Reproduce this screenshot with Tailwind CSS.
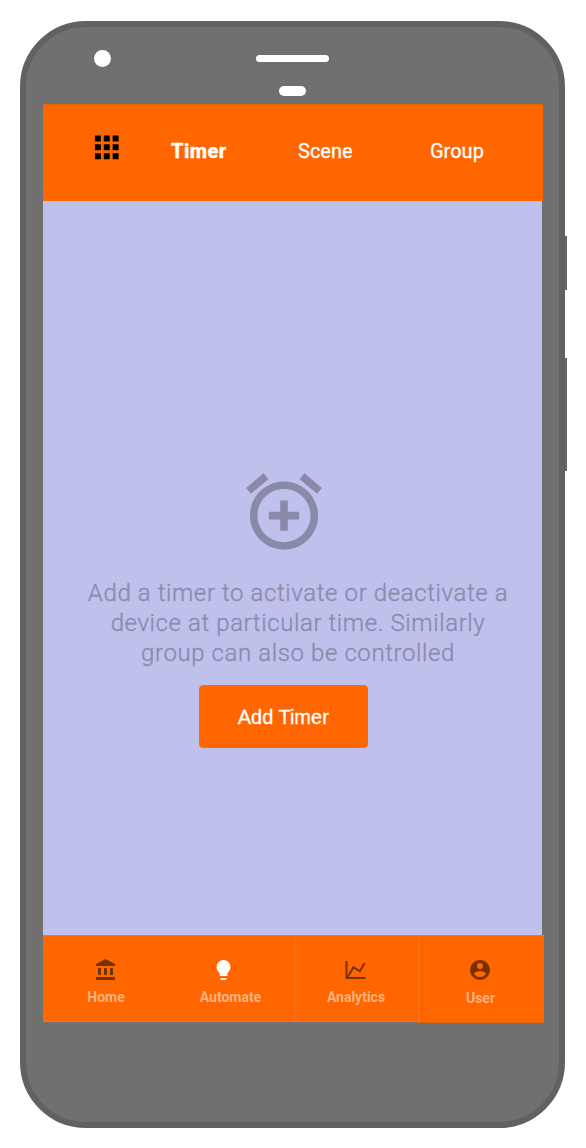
<!DOCTYPE html>
<html lang="en">
<head>
<meta charset="utf-8">
<title>Timer</title>
<script src="https://cdn.jsdelivr.net/npm/@tailwindcss/browser@4"></script>
</head>
<body class="bg-white">
<div class="relative flex w-[586px] h-[1148px] pl-5 pt-[21px] overflow-hidden font-['Roboto',sans-serif]">
  <!-- side buttons -->
  <div class="absolute left-[564px] top-[236px] w-[3px] h-[54px] bg-[#666]"></div>
  <div class="absolute left-[564px] top-[358px] w-[3px] h-[113px] bg-[#666]"></div>
  <!-- phone body -->
  <div class="relative w-[545px] h-[1107px] rounded-[66px] border-[6px] border-[#616161] bg-[#707070] pl-[17px] pt-[77px]">
    <div class="absolute left-[68px] top-[23px] size-[17px] rounded-full bg-white"></div>
    <div class="absolute left-[230px] top-[28px] w-[73px] h-[7px] rounded-full bg-white"></div>
    <div class="absolute left-[253px] top-[59px] w-[27px] h-[10px] rounded-full bg-white"></div>

    <div class="flex flex-col w-[501px]">
      <header class="flex w-[500px] h-[97px] bg-[#ff6600] border-t border-[#e86208] text-white text-[20px] leading-6">
        <svg class="ml-[46px] mt-[24.5px] size-[35.5px] shrink-0" viewBox="0 0.3 24 24"><path d="M4 8h4V4H4v4zm6 12h4v-4h-4v4zm-6 0h4v-4H4v4zm0-6h4v-4H4v4zm6 0h4v-4h-4v4zm6-10v4h4V4h-4zm-6 4h4V4h-4v4zm6 6h4v-4h-4v4zm0 6h4v-4h-4v4z"/></svg>
        <span class="ml-[46.5px] mt-[34px] w-[127px] font-extrabold tracking-[0.4px] [-webkit-text-stroke:0.3px_white]">Timer</span>
        <span class="mt-[34px] w-[132px] [-webkit-text-stroke:0.3px_white]">Scene</span>
        <span class="mt-[34px] [-webkit-text-stroke:0.3px_white]">Group</span>
      </header>

      <main class="w-[499px] h-[734px] bg-[#c0c0ed] flex flex-col">
        <svg class="ml-[196px] mt-[265px] size-[91px] shrink-0" viewBox="0.13 -0.08 24 24" fill="#8989aa"><path d="M7.88 3.39L6.6 1.86 2 5.71l1.29 1.53 4.59-3.85zM22 5.72l-4.6-3.86-1.29 1.53 4.6 3.86L22 5.72zM12 4c-4.97 0-9 4.03-9 9s4.02 9 9 9c4.97 0 9-4.03 9-9s-4.03-9-9-9zm0 16c-3.87 0-7-3.13-7-7s3.13-7 7-7 7 3.13 7 7-3.13 7-7 7zm1-11h-2v3H8v2h3v3h2v-3h3v-2h-3V9z"/></svg>
        <p class="ml-[25px] mt-[21px] w-[460px] text-center text-[24px] leading-[30px] font-light tracking-[0.6px] text-[#8b8bac] [-webkit-text-stroke:0.35px_#8b8bac]">Add a timer to activate or deactivate a<br>device at particular time. Similarly<br>group can also be controlled</p>
        <button class="ml-[155.5px] mt-[17px] w-[169.5px] h-[63px] pt-px rounded-[4px] bg-[#ff6600] border border-[#e4702a] text-white text-[20px] font-['Liberation_Sans',sans-serif] [-webkit-text-stroke:0.3px_white]">Add Timer</button>
      </main>

      <nav class="flex h-[88px] text-[14px] leading-4 font-bold text-[#ffb27f] text-center">
        <div class="flex flex-col w-[126px] h-[87px] bg-[#ff6600] border-y border-[#d08055] pt-[22px]">
          <svg class="ml-[51px] size-6" viewBox="0 0 24 24" fill="#7a3100"><path d="M4 10v7h3v-7H4zm6 0v7h3v-7h-3zM2 22h19v-3H2v3zm14-12v7h3v-7h-3zm-4.5-9L2 6v2h19V6l-9.5-5z"/></svg>
          <span class="mt-[7px]">Home</span>
        </div>
        <div class="flex flex-col w-[125px] h-[87px] bg-[#ff6600] border-y border-[#d08055] pt-[22px]">
          <svg class="ml-[42px] size-6" viewBox="-0.5 0 24 24" fill="#fff"><path d="M12 2A7 7 0 0 0 5 9C5 11.38 6.19 13.47 8 14.74V17A1 1 0 0 0 9 18H15A1 1 0 0 0 16 17V14.74C17.81 13.47 19 11.38 19 9A7 7 0 0 0 12 2M9 21A1 1 0 0 0 10 22H14A1 1 0 0 0 15 21V20H9V21Z"/></svg>
          <span class="mt-[7px] pr-[2px]">Automate</span>
        </div>
        <div class="flex flex-col w-[124px] h-[87px] bg-[#ff6600] border-y border-l border-y-[#d08055] border-l-[#fb7420] pt-[22px]">
          <svg class="ml-[48px] size-6" viewBox="-0.5 0 24 24" fill="#7a3100"><path d="M16 11.78L20.24 4.45L21.97 5.45L16.74 14.5L10.23 10.75L5.46 19H22V21H2V3H4V17.54L9.5 8L16 11.78Z"/></svg>
          <span class="mt-[7px] pr-px">Analytics</span>
        </div>
        <div class="flex flex-col w-[126px] h-[88px] bg-[#ff6600] border-t border-l border-t-[#d08055] border-l-[#fb7420] border-b border-b-[#d9650f] pt-[22px]">
          <svg class="ml-[49px] size-6" viewBox="0 0 24 24" fill="#7a3100"><path d="M12 19.2C9.5 19.2 7.29 17.92 6 16C6.03 14 10 12.9 12 12.9C14 12.9 17.97 14 18 16C16.71 17.92 14.5 19.2 12 19.2M12 5A3 3 0 0 1 15 8A3 3 0 0 1 12 11A3 3 0 0 1 9 8A3 3 0 0 1 12 5M12 2A10 10 0 0 0 2 12A10 10 0 0 0 12 22A10 10 0 0 0 22 12C22 6.47 17.5 2 12 2Z"/></svg>
          <span class="mt-[8px] pr-[2px]">User</span>
        </div>
      </nav>
    </div>
  </div>
</div>
</body>
</html>
